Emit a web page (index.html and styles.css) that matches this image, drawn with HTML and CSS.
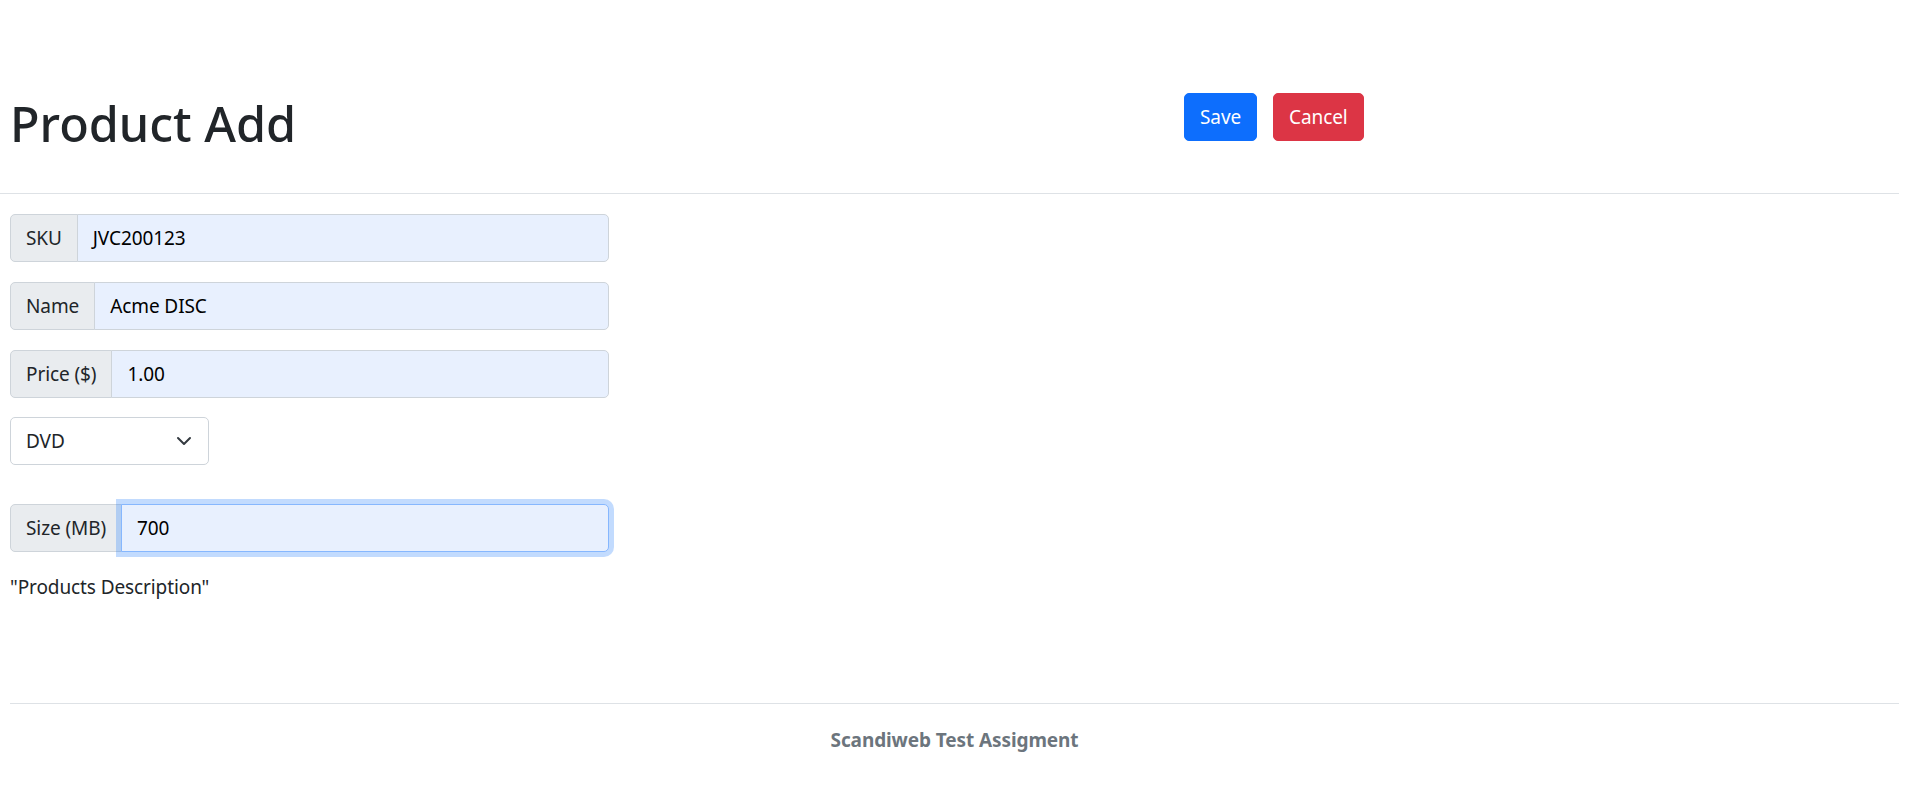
FILE: index.html
```html
<!DOCTYPE html>
<html lang="en">
<head>
<meta charset="utf-8">
<title>Product Add</title>
<link rel="stylesheet" href="styles.css">
</head>
<body>
<div class="page">
  <header class="top">
    <h1 class="title">Product Add</h1>
    <div class="actions">
      <button class="btn btn-save" type="button">Save</button>
      <button class="btn btn-cancel" type="button">Cancel</button>
    </div>
  </header>
  <hr class="rule rule-top">
  <main class="form">
    <div class="group">
      <span class="addon">SKU</span>
      <div class="field">JVC200123</div>
    </div>
    <div class="group">
      <span class="addon">Name</span>
      <div class="field">Acme DISC</div>
    </div>
    <div class="group">
      <span class="addon">Price ($)</span>
      <div class="field">1.00</div>
    </div>
    <div class="select">
      <span>DVD</span>
      <svg class="chev" width="16" height="16" viewBox="0 0 16 16"><path d="m2 5 6 6 6-6" fill="none" stroke="#343a40" stroke-width="2" stroke-linecap="round" stroke-linejoin="round"/></svg>
    </div>
    <div class="group group-size">
      <span class="addon">Size (MB)</span>
      <div class="field field-focus">700</div>
    </div>
    <p class="desc">"Products Description"</p>
  </main>
  <footer class="foot">
    <hr class="rule">
    <p class="foot-text">Scandiweb Test Assigment</p>
  </footer>
</div>
</body>
</html>
```
FILE: styles.css
```css
* { box-sizing: border-box; }
html, body { margin: 0; padding: 0; background: #fff; }
body {
  font-family: "Noto Sans", "Open Sans", sans-serif;
  font-size: 19px;
  line-height: 30px;
  letter-spacing: -0.1px;
  color: #212529;
}
.page { width: 1899px; }
.top {
  display: grid;
  grid-template-columns: 1174px auto;
  align-items: start;
  padding: 93px 0 0 10px;
  height: 193px;
}
.title {
  margin: 0;
  font-size: 48.5px;
  line-height: 60px;
  font-weight: 500;
  letter-spacing: 0;
  color: #212529;
}
.actions { display: flex; gap: 16px; }
.btn {
  font-family: inherit;
  font-size: 19px;
  letter-spacing: -0.1px;
  line-height: 30px;
  height: 48px;
  padding: 0 15px;
  border: 1px solid transparent;
  border-radius: 5px;
  color: #fff;
}
.btn-save { background: #0d6efd; border-color: #0d6efd; }
.btn-cancel { background: #dc3545; border-color: #dc3545; }
.rule {
  margin: 0;
  border: 0;
  border-top: 1px solid #dee2e6;
  height: 0;
}
.form { padding: 20px 0 0 10px; }
.group {
  display: flex;
  width: 599px;
  height: 48px;
  margin-bottom: 20px;
}
.addon {
  display: flex;
  align-items: center;
  padding: 0 15px;
  background: #e9ecef;
  border: 1px solid #ced4da;
  border-radius: 5px 0 0 5px;
  white-space: nowrap;
}
.field {
  flex: 1;
  display: flex;
  align-items: center;
  padding: 0 15px;
  margin-left: -1px;
  background: #e8f0fe;
  border: 1px solid #ced4da;
  border-radius: 0 5px 5px 0;
  color: #000;
}
.field-focus {
  position: relative;
  z-index: 2;
  border-color: #86b7fe;
  box-shadow: 0 0 0 5px rgba(13, 110, 253, 0.25);
}
.select {
  display: flex;
  align-items: center;
  justify-content: space-between;
  width: 199px;
  height: 48px;
  margin: -1px 0 39px;
  padding: 0 16px 0 15px;
  border: 1px solid #ced4da;
  border-radius: 5px;
  background: #fff;
}
.desc { margin: 0; }
.foot { padding: 101px 0 0 10px; }
.foot-text {
  margin: 21px 0 0;
  text-align: center;
  font-weight: 700;
  color: #6c757d;
}
```
